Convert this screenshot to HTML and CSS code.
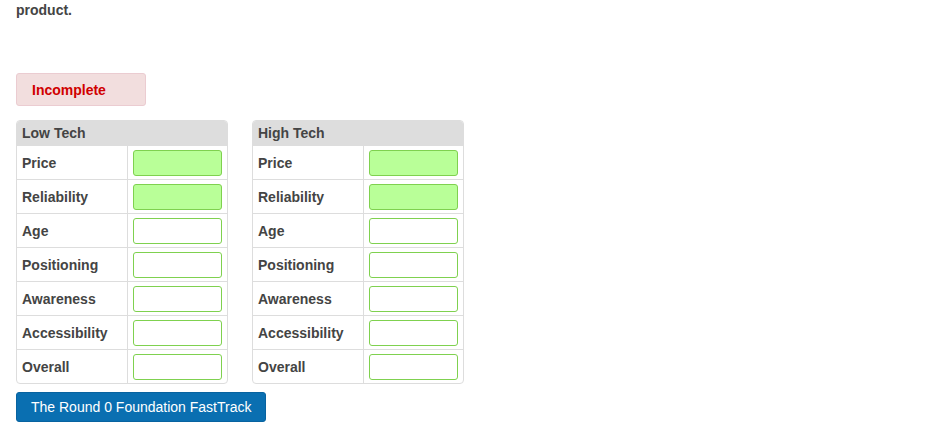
FILE: index.html
```html
<!DOCTYPE html>
<html>
<head>
<meta charset="utf-8">
<link rel="stylesheet" href="styles.css">
</head>
<body>
<div class="page">
  <p class="intro">product.</p>
  <div class="status">Incomplete</div>
  <div class="tables">
    <table class="grid">
      <thead><tr><th colspan="2">Low Tech</th></tr></thead>
      <tbody>
        <tr><td class="label">Price</td><td class="cell"><input class="field filled" type="text"></td></tr>
        <tr><td class="label">Reliability</td><td class="cell"><input class="field filled" type="text"></td></tr>
        <tr><td class="label">Age</td><td class="cell"><input class="field" type="text"></td></tr>
        <tr><td class="label">Positioning</td><td class="cell"><input class="field" type="text"></td></tr>
        <tr><td class="label">Awareness</td><td class="cell"><input class="field" type="text"></td></tr>
        <tr><td class="label">Accessibility</td><td class="cell"><input class="field" type="text"></td></tr>
        <tr><td class="label">Overall</td><td class="cell"><input class="field" type="text"></td></tr>
      </tbody>
    </table>
    <table class="grid">
      <thead><tr><th colspan="2">High Tech</th></tr></thead>
      <tbody>
        <tr><td class="label">Price</td><td class="cell"><input class="field filled" type="text"></td></tr>
        <tr><td class="label">Reliability</td><td class="cell"><input class="field filled" type="text"></td></tr>
        <tr><td class="label">Age</td><td class="cell"><input class="field" type="text"></td></tr>
        <tr><td class="label">Positioning</td><td class="cell"><input class="field" type="text"></td></tr>
        <tr><td class="label">Awareness</td><td class="cell"><input class="field" type="text"></td></tr>
        <tr><td class="label">Accessibility</td><td class="cell"><input class="field" type="text"></td></tr>
        <tr><td class="label">Overall</td><td class="cell"><input class="field" type="text"></td></tr>
      </tbody>
    </table>
  </div>
  <button class="action" type="button">The Round 0 Foundation FastTrack</button>
</div>
</body>
</html>
```
FILE: styles.css
```css
* { box-sizing: border-box; }
html, body { margin: 0; padding: 0; background: #fff; }
body {
  font-family: "Liberation Sans", Arial, Helvetica, sans-serif;
  font-size: 14px;
  color: #444;
}
.page {
  padding: 0 16px;
  display: flex;
  flex-direction: column;
  align-items: flex-start;
}
.intro {
  margin: 0;
  font-weight: bold;
  line-height: 20px;
  font-size: 14px;
  color: #444;
}
.status {
  margin-top: 53px;
  width: 130px;
  height: 33px;
  padding: 0 15px;
  display: flex;
  align-items: center;
  background: #f2dede;
  border: 1px solid #ebccd1;
  border-radius: 3px;
  color: #d00000;
  font-weight: bold;
  font-size: 14px;
}
.tables {
  margin-top: 14px;
  display: flex;
  gap: 24px;
}
.grid {
  width: 212px;
  border: 1px solid #ddd;
  border-radius: 4px;
  border-spacing: 0;
  border-collapse: separate;
  overflow: hidden;
}
.grid th {
  background: #ddd;
  height: 24px;
  padding: 0 5px;
  text-align: left;
  font-weight: bold;
  font-size: 14px;
  line-height: 16px;
  color: #444;
}
.grid td {
  border-top: 1px solid #ddd;
  height: 34px;
  padding: 0;
  line-height: 16px;
  vertical-align: middle;
}
.grid .label {
  width: 111px;
  padding: 0 0 0 5px;
  border-right: 1px solid #ddd;
  font-weight: bold;
  color: #444;
}
.grid .cell {
  padding: 0 4px 0 5px;
}
.field {
  display: block;
  width: 89px;
  height: 26px;
  margin: 0;
  border: 1px solid #7fd14f;
  border-radius: 3px;
  background: #fff;
  padding: 0 4px;
  font: inherit;
  outline: none;
}
.field.filled {
  background: #b9ff98;
}
.action {
  margin-top: 8px;
  width: 250px;
  height: 30px;
  padding: 0 14px;
  white-space: nowrap;
  background: #0a6fb1;
  border: 1px solid #0863a0;
  border-radius: 3px;
  color: #fff;
  font-family: "Liberation Sans", Arial, Helvetica, sans-serif;
  font-size: 14px;
  cursor: pointer;
}
```
